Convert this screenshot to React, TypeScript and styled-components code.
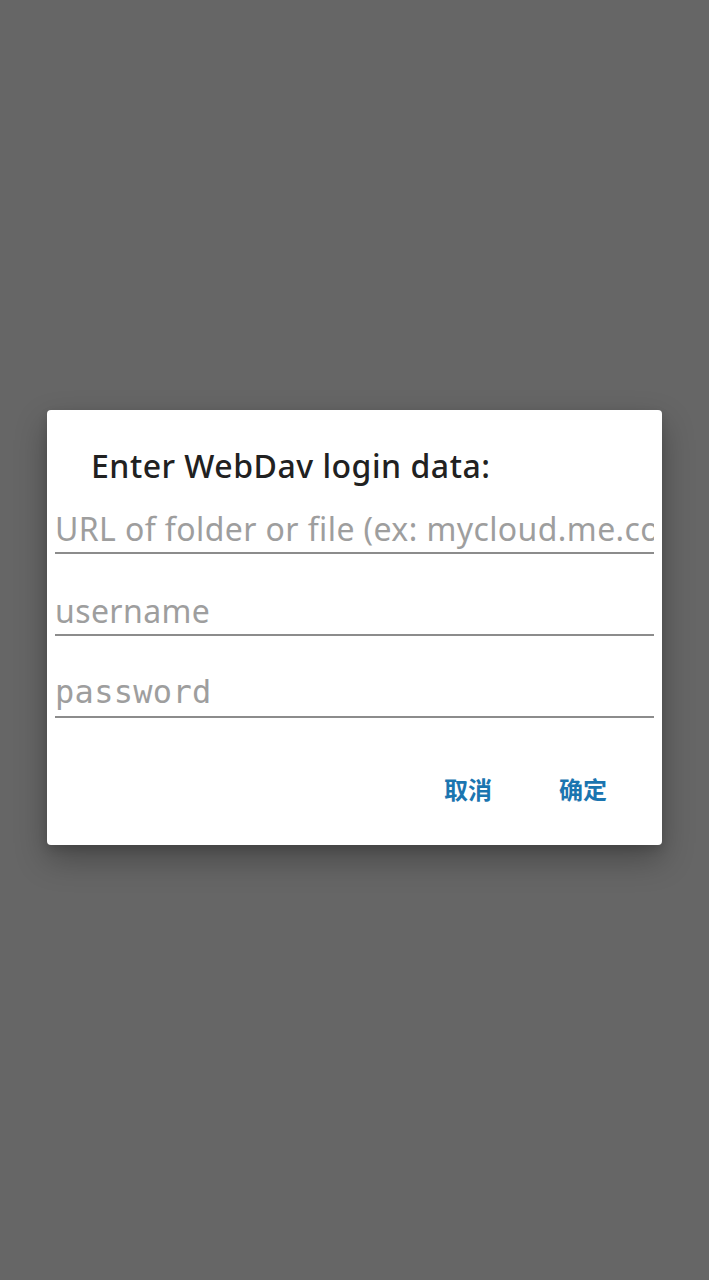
import React from 'react';
import styled, { createGlobalStyle } from 'styled-components';

const GlobalStyle = createGlobalStyle`
  html, body {
    margin: 0;
    padding: 0;
    background: #666666;
  }
  body {
    font-family: 'Noto Sans', 'Noto Sans CJK SC', sans-serif;
  }
`;

const Screen = styled.div`
  width: 709px;
  height: 1280px;
  box-sizing: border-box;
  padding-top: 410px;
  display: flex;
  flex-direction: column;
  align-items: center;
  background: #666666;
`;

const Dialog = styled.div`
  width: 615px;
  box-sizing: border-box;
  display: flex;
  flex-direction: column;
  padding: 38px 8px 0;
  background: #ffffff;
  border-radius: 4px;
  box-shadow: 0 14px 32px rgba(0, 0, 0, 0.3), 0 4px 10px rgba(0, 0, 0, 0.12);
`;

const Title = styled.h2`
  margin: 0 0 10px;
  padding-left: 36px;
  font-family: 'Noto Sans', sans-serif;
  font-size: 32px;
  line-height: 36px;
  font-weight: 500;
  letter-spacing: 0.5px;
  color: #212121;
`;

const Fields = styled.div`
  display: flex;
  flex-direction: column;
  gap: 22px;
`;

const Field = styled.input<{ mono?: boolean }>`
  display: block;
  width: 100%;
  height: 60px;
  box-sizing: border-box;
  padding: 14px 0 4px;
  margin: 0;
  border: none;
  border-bottom: 2px solid #8c8c8c;
  border-radius: 0;
  outline: none;
  background: transparent;
  font-family: ${({ mono }) =>
    mono ? "'DejaVu Sans Mono', 'Liberation Mono', monospace" : "'Noto Sans', sans-serif"};
  font-size: 32px;
  letter-spacing: ${({ mono }) => (mono ? '0.3px' : '0.4px')};
  line-height: 40px;
  color: #212121;

  &::placeholder {
    color: #9e9e9e;
    opacity: 1;
  }
`;

const Actions = styled.div`
  display: flex;
  justify-content: flex-end;
  gap: 67px;
  padding: 55px 47px 40px 0;
`;

const ActionButton = styled.button`
  padding: 0;
  border: none;
  background: transparent;
  font-family: 'Noto Sans CJK SC', sans-serif;
  font-size: 24px;
  line-height: 32px;
  font-weight: 700;
  color: #1b75b0;
  cursor: pointer;
`;

export default function App() {
  return (
    <>
      <GlobalStyle />
      <Screen>
        <Dialog>
          <Title>Enter WebDav login data:</Title>
          <Fields>
            <Field placeholder="URL of folder or file (ex: mycloud.me.com/dav)" />
            <Field placeholder="username" />
            <Field mono type="password" placeholder="password" />
          </Fields>
          <Actions>
            <ActionButton>取消</ActionButton>
            <ActionButton>确定</ActionButton>
          </Actions>
        </Dialog>
      </Screen>
    </>
  );
}
